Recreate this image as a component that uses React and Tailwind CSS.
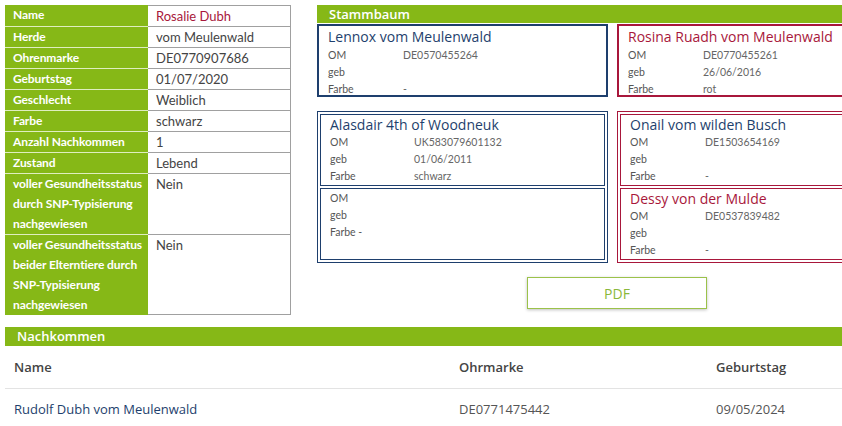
const details = [
  ['Name', ['Rosalie Dubh'], 'red'],
  ['Herde', ['vom Meulenwald']],
  ['Ohrenmarke', ['DE0770907686']],
  ['Geburtstag', ['01/07/2020']],
  ['Geschlecht', ['Weiblich']],
  ['Farbe', ['schwarz']],
  ['Anzahl Nachkommen', ['1']],
  ['Zustand', ['Lebend']],
  ['voller Gesundheitsstatus durch SNP-Typisierung nachgewiesen', ['Nein']],
  ['voller Gesundheitsstatus beider Elterntiere durch SNP-Typisierung nachgewiesen', ['Nein']],
];

function DetailTable() {
  return (
    <div className="w-[286px] shrink-0">
      {details.map(([label, value, tone], i) => (
        <div key={label} className="flex">
          <div className={`w-[143px] shrink-0 bg-[#86b817] pl-2 text-[12px] font-bold leading-[20px] tracking-[-0.1px] text-white ${i < details.length - 1 ? 'border-b border-[#dfeec0]' : ''}`}>
            {label}
          </div>
          <div className={`flex-1 border-b border-r border-[#a0a0a0] px-2 text-[13px] leading-[20px] ${i === 0 ? 'border-t' : ''} ${tone === 'red' ? 'text-[#a8173b]' : 'text-[#444]'}`}>
            {value}
          </div>
        </div>
      ))}
    </div>
  );
}

function InfoRows({ rows, valueCol = 'w-[75px]' }) {
  return (
    <div className="text-[10.5px] leading-[17px]">
      {rows.map(([k, v]) => (
        <div key={k} className="flex">
          <span className={`${valueCol} shrink-0 text-[#555]`}>{k}</span>
          <span className="text-[#666]">{v}</span>
        </div>
      ))}
    </div>
  );
}

function Animal({ name, rows, color, valueCol, titleLh = 'leading-[19px]' }) {
  return (
    <div className="px-[9px]">
      {name && (
        <div className={`font-['Open_Sans',sans-serif] text-[14px] ${titleLh} ${color}`}>{name}</div>
      )}
      <InfoRows rows={rows} valueCol={valueCol} />
    </div>
  );
}

function Stammbaum() {
  const navy = 'text-[#1e3f6d]';
  const red = 'text-[#a8173b]';
  return (
    <div className="w-[600px] shrink-0">
      <div className="h-[18px] bg-[#86b817] px-3 font-['Open_Sans',sans-serif] text-[13px] font-semibold leading-[18px] text-white">
        Stammbaum
      </div>
      <div className="mt-[1px] grid grid-cols-[291px_291px] gap-x-[9px]">
        <div className="h-[73px] border-2 border-[#1e3f6d]">
          <Animal
            name="Lennox vom Meulenwald"
            color={navy}
            titleLh="leading-[21px]"
            rows={[['OM', 'DE0570455264'], ['geb', ''], ['Farbe', '-']]}
          />
        </div>
        <div className="h-[73px] border-2 border-[#a8173b]">
          <Animal
            name="Rosina Ruadh vom Meulenwald"
            color={red}
            titleLh="leading-[21px]"
            rows={[['OM', 'DE0770455261'], ['geb', '26/06/2016'], ['Farbe', 'rot']]}
          />
        </div>
        <div className="mt-[14px] flex flex-col gap-[2px] border border-[#1e3f6d] p-[2px]">
          <div className="h-[72px] border border-[#1e3f6d]">
            <Animal
              name="Alasdair 4th of Woodneuk"
              color={navy}
              valueCol="w-[84px]"
              rows={[['OM', 'UK583079601132'], ['geb', '01/06/2011'], ['Farbe', 'schwarz']]}
            />
          </div>
          <div className="h-[72px] border border-[#1e3f6d] pt-[1px]">
            <div className="px-[9px] text-[10.5px] leading-[17px] text-[#555]">
              <div>OM</div>
              <div>geb</div>
              <div>Farbe -</div>
            </div>
          </div>
        </div>
        <div className="mt-[14px] flex flex-col gap-[2px] border border-[#a8173b] p-[2px]">
          <div className="h-[72px] border border-[#a8173b]">
            <Animal
              name="Onail vom wilden Busch"
              color={navy}
              rows={[['OM', 'DE1503654169'], ['geb', ''], ['Farbe', '-']]}
            />
          </div>
          <div className="h-[72px] border border-[#a8173b]">
            <Animal
              name="Dessy von der Mulde"
              color={red}
              valueCol="w-[75px]"
              rows={[['OM', 'DE0537839482'], ['geb', ''], ['Farbe', '-']]}
            />
          </div>
        </div>
      </div>
      <div className="mt-[14px] flex w-full justify-center">
        <button className="h-[32px] w-[180px] border border-[#9bc24a] bg-white font-['Open_Sans',sans-serif] text-[14px] text-[#8ab83a] shadow-[0_1px_3px_rgba(0,0,0,0.25)]">
          PDF
        </button>
      </div>
    </div>
  );
}

export default function App() {
  return (
    <div className="h-[426px] w-[842px] overflow-hidden bg-white pl-[5px] pt-[5px] font-['Lato','Liberation_Sans',sans-serif]">
      <div className="flex gap-[26px]">
        <DetailTable />
        <Stammbaum />
      </div>
      <div className="mt-[12px] h-[19px] w-[850px] bg-[#86b817] px-3 font-['Open_Sans',sans-serif] text-[13px] font-semibold leading-[19px] text-white">
        Nachkommen
      </div>
      <div className="w-[850px] font-['Open_Sans',sans-serif]">
        <div className="grid grid-cols-[445px_257px_1fr] border-b border-[#e3e3e3] pl-[9px] text-[13px] font-semibold leading-[42px] text-[#444]">
          <div>Name</div>
          <div>Ohrmarke</div>
          <div>Geburtstag</div>
        </div>
        <div className="grid grid-cols-[445px_257px_1fr] pl-[9px] text-[13px] leading-[40px] text-[#555]">
          <div className="text-[#1e3f6d]">Rudolf Dubh vom Meulenwald</div>
          <div>DE0771475442</div>
          <div>09/05/2024</div>
        </div>
      </div>
    </div>
  );
}
